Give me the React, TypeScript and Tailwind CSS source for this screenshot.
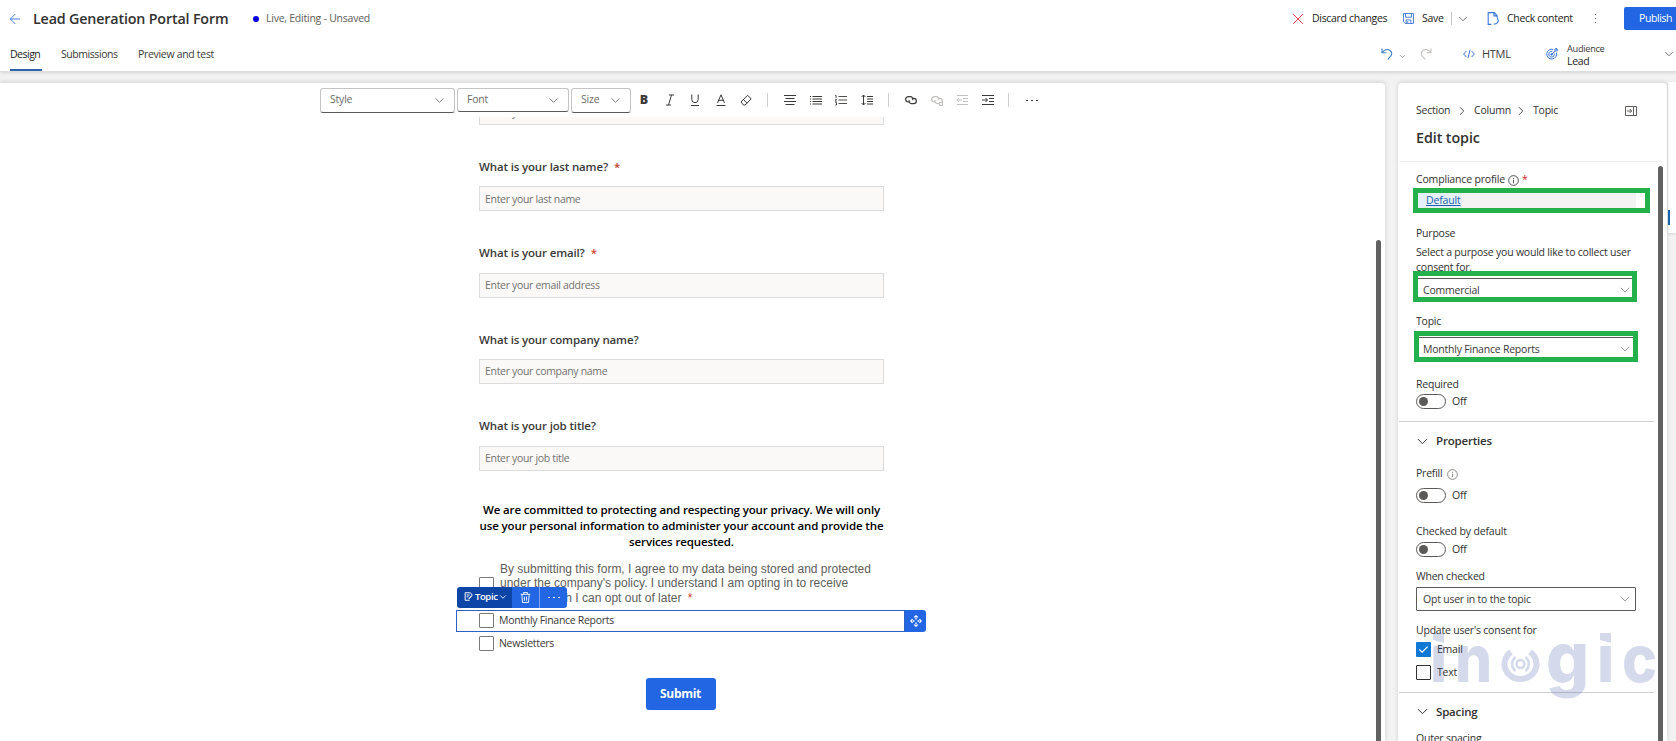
import React from 'react';
import { ArrowLeft, ChevronDown, ChevronRight, X } from 'lucide-react';
import clsx from 'clsx';

interface IconProps {
  children: React.ReactNode;
  className?: string;
  size?: number;
}

// 12-unit grid icon, drawn with thin strokes
function Icon({ children, className, size = 12 }: IconProps) {
  return (
    <svg
      width={size}
      height={size}
      viewBox="0 0 12 12"
      fill="none"
      stroke="currentColor"
      strokeWidth="1"
      className={clsx('shrink-0', className)}
    >
      {children}
    </svg>
  );
}

const fields = [
  { label: 'What is your last name?', placeholder: 'Enter your last name', required: true },
  { label: 'What is your email?', placeholder: 'Enter your email address', required: true },
  { label: 'What is your company name?', placeholder: 'Enter your company name', required: false },
  { label: 'What is your job title?', placeholder: 'Enter your job title', required: false },
];

function Header() {
  return (
    <header className="relative z-10 h-[72px] shrink-0 border-b border-[#dcdcdc] bg-white shadow-[0_1px_3px_rgba(0,0,0,0.12)]">
      <div className="flex h-[37px] items-center">
        <ArrowLeft className="ml-[7px] h-4 w-4 text-[#4a7fe0]" strokeWidth={1.5} />
        <h1 className="ml-[10px] w-[218px] text-[14.3px] font-semibold tracking-[-0.17px] text-[#323130]">
          Lead Generation Portal Form
        </h1>
        <span className="ml-[2px] h-[6px] w-[6px] rounded-full bg-[#0000e0]" />
        <span className="ml-[7px] text-[10.5px] tracking-[-0.24px] text-[#605e5c]">Live, Editing - Unsaved</span>

        <div className="ml-auto flex h-full items-center text-[10.5px] tracking-[-0.31px] whitespace-nowrap text-[#242322]">
          <X className="h-[18px] w-[18px] text-[#e0404a]" strokeWidth={1.3} />
          <span className="ml-[5px] w-[91px]">Discard changes</span>
          <Icon className="text-[#3a76d8]" size={11}>
            <path d="M.6.6h10.8v10.8H2.4L.6 9.6zM2.8.6v4h6.4v-4M3.4 11.4V7.6h5.2v3.8M5.2 9v2" />
          </Icon>
          <span className="ml-2 w-[29px]">Save</span>
          <span className="h-[13px] w-px bg-[#c8c6c4]" />
          <ChevronDown className="ml-1 h-[14px] w-[14px] text-[#605e5c]" strokeWidth={1.5} />
          <Icon className="ml-[17px] text-[#3a76d8]" size={13}>
            <path d="M4 11.4H1.1V.6h5.5l2.8 2.8v2M6.4.6v3h3M9.4 5.4l1.2 3-1.8 2.2-2.6.8" />
          </Icon>
          <span className="ml-[7px] w-[85px]">Check content</span>
          <span className="flex w-[6px] flex-col items-center gap-[3px]">
            <i className="h-px w-px bg-[#605e5c]" />
            <i className="h-px w-px bg-[#605e5c]" />
            <i className="h-px w-px bg-[#605e5c]" />
          </span>
          <button className="ml-[26px] h-[23px] w-[52px] rounded-l-[2px] bg-[#2266e3] pl-[15px] text-left text-[10.5px] font-medium tracking-[-0.42px] text-white">
            Publish
          </button>
        </div>
      </div>

      <div className="flex h-[34px] items-stretch text-[10.5px] tracking-[-0.31px] text-[#3b3a39]">
        <nav className="flex">
          <a className="ml-[10px] flex w-8 items-center border-b-2 border-[#2b64a8] pt-[3px] font-medium tracking-[-0.5px] text-[#242322]">
            Design
          </a>
          <a className="ml-[19px] flex w-[57px] items-center pt-px tracking-[-0.44px]">Submissions</a>
          <a className="ml-5 flex items-center pt-px">Preview and test</a>
        </nav>
        <div className="ml-auto flex items-center">
          <Icon className="text-[#3a7cc8]" size={12}>
            <path d="M1 .5v4.300h4.300M1 4.800C3 1.500 6.500.800 8.700 2.200c2.600 1.800 2.600 4.400.800 6.200L6.800 11.400" strokeWidth="1.100" />
          </Icon>
          <ChevronDown className="mt-1 ml-[5px] h-[9px] w-[9px] text-[#8a8886]" />
          <Icon className="ml-[13px] text-[#c3c1bf]" size={12}>
            <path d="M11 .5v4.300H6.700M11 4.800C9 1.500 5.500.800 3.300 2.200.700 4 .700 6.600 2.500 8.400l2.700 3" strokeWidth="1.100" />
          </Icon>
          <Icon className="ml-[31px] text-[#3a76d8]" size={12}>
            <path d="M3.400 3 .6 6l2.800 3M8.600 3l2.800 3-2.800 3M7 1.800 5 10.200" />
          </Icon>
          <span className="ml-[7px] w-[64px] text-[11px]">HTML</span>
          <Icon className="text-[#3a76d8]" size={12}>
            <path d="M10.300 4.500a4.900 4.900 0 1 1-3-3M8.300 5.500a2.800 2.800 0 1 1-2-2M5.800 6.200 9 3M9 3V1.200L10.400 0v1.700h1.500L10.600 3z" />
            <circle cx="5.600" cy="6.400" r=".8" fill="currentColor" />
          </Icon>
          <div className="ml-[9px] flex w-[95px] flex-col pt-px leading-[12px]">
            <span className="text-[9.2px] tracking-[-0.28px]">Audience</span>
            <span className="text-[#242322]">Lead</span>
          </div>
          <ChevronDown className="h-[14px] w-[14px] text-[#605e5c]" strokeWidth={1.5} />
        </div>
      </div>
    </header>
  );
}

function ToolbarSelect({ label, className }: { label: string; className: string }) {
  return (
    <div
      className={clsx(
        'flex items-center justify-between rounded-[3px] border border-[#c4c4c4] border-b-[#5a5a5a] pr-[7px] pl-[9px] text-[10.5px] tracking-[-0.2px] text-[#6e6c6a]',
        className,
      )}
    >
      {label}
      <ChevronDown className="h-[15px] w-[15px] text-[#605e5c]" strokeWidth={1.3} />
    </div>
  );
}

function Separator({ className }: { className: string }) {
  return <span className={clsx('h-[14px] w-px bg-[#d2d0ce]', className)} />;
}

function LinkIcon() {
  return (
    <Icon>
      <path
        d="M5.200 8H3.400a2.700 2.700 0 0 1 0-5.400h1.800a2.700 2.700 0 0 1 2.500 3.700M6.800 4.400h1.900a2.600 2.600 0 0 1 0 5.300H6.600A2.600 2.600 0 0 1 4.200 6"
        strokeWidth="1.200"
      />
    </Icon>
  );
}

function Toolbar() {
  return (
    <div className="flex h-[34px] shrink-0 items-center pl-[320px] text-[#3b3a39]">
      <ToolbarSelect label="Style" className="h-[25px] w-[135px]" />
      <ToolbarSelect label="Font" className="ml-[2px] h-6 w-[112px]" />
      <ToolbarSelect label="Size" className="ml-[2px] h-[25px] w-[60px]" />

      <div className="ml-[7px] flex items-center gap-[13.5px]">
        <span className="w-3 text-center text-[12.5px] leading-3 font-extrabold">B</span>
        <Icon>
          <path d="M5 1h5M2 11h5M7.500 1l-3 10" />
        </Icon>
        <Icon>
          <path d="M2.800.5v5a3.200 3.200 0 0 0 6.400 0v-5M2 11.500h8" />
        </Icon>
        <Icon>
          <path d="M2.500 9 6 .8 9.500 9M3.700 6.300h4.600M1.500 11.500h9" />
        </Icon>
        <Icon>
          <path d="M1 8 7.500 1.300l3.700 3.500-6 6.200H3.400zM3.400 5.600l3.700 3.600" />
        </Icon>
      </div>
      <Separator className="ml-[15px]" />
      <div className="ml-4 flex items-center gap-[13.7px]">
        <Icon>
          <path d="M0 1.500h12M1.500 4.500h9M0 7.500h12M1.500 10.500h9" />
        </Icon>
        <Icon>
          <path d="M2.500 2.500H12M2.500 5H12M2.500 7.500H12M2.500 10H12M0 2.500h1M0 5h1M0 7.500h1M0 10h1" />
        </Icon>
        <Icon>
          <path
            d="M3.500 2.500H12M3.500 6H12M3.500 9.500H12M.3 1.500h.8v2.400M.3 5.500h1.200L.3 7.300h1.300M.3 8.500h1.200v2.500H.3"
            strokeWidth=".9"
          />
        </Icon>
        <Icon>
          <path d="M2.500 1v10M.6 3l1.900-2 1.900 2M.6 9l1.900 2 1.900-2M6 2.500h6M6 5h6M6 7.500h6M6 10h6" />
        </Icon>
      </div>
      <Separator className="ml-[15px]" />
      <div className="ml-4 flex items-center gap-[13.5px]">
        <LinkIcon />
        <span className="relative flex text-[#c3c1bf]">
          <LinkIcon />
          <i className="absolute right-0 bottom-0 h-1 w-1 border border-[#c3c1bf] bg-white" />
        </span>
        <Icon className="text-[#c3c1bf]">
          <path d="M1 1.500h11M7 4.500h5M7 7.500h5M1 10.500h11M6 6H.8M2.800 4 .8 6l2 2" />
        </Icon>
        <Icon>
          <path d="M0 1.500h12M7 4.500h5M7 7.500h5M0 10.500h12M0 6h5.500M3.500 4l2 2-2 2" />
        </Icon>
      </div>
      <Separator className="ml-[14px]" />
      <span className="ml-[17px] flex gap-[3px]">
        <i className="h-px w-[2px] bg-[#3b3a39]" />
        <i className="h-px w-[2px] bg-[#3b3a39]" />
        <i className="h-px w-[2px] bg-[#3b3a39]" />
      </span>
    </div>
  );
}

function FormInput({ placeholder }: { placeholder: string }) {
  return (
    <div className="flex h-[25px] shrink-0 items-center border border-[#dcdcdc] bg-[#faf9f8] px-[5px] pt-px text-[10.5px] tracking-[-0.32px] text-[#75736f]">
      {placeholder}
    </div>
  );
}

function FormCheckbox() {
  return <span className="h-[15px] w-[15px] shrink-0 rounded-[1px] border border-[#7b7a78] bg-white" />;
}

function TopicActions() {
  return (
    <div className="absolute top-[25px] -left-[22px] flex h-[21px] w-[110px] overflow-hidden rounded-[3px] text-white">
      <div className="flex w-[55px] items-center bg-[#0c45a6] pl-[7px] text-[9.5px] font-semibold tracking-[-0.4px]">
        <Icon size={9} className="mb-[2px]">
          <path d="M7.500 11H1.500V1h7l2.500 3-4 5M3.500 4h4M3.500 6.500h2.500M6 9.500 10 5" strokeWidth="1.300" />
        </Icon>
        <span className="ml-[2px]">Topic</span>
        <ChevronDown className="ml-[1px] h-[10px] w-[10px]" />
      </div>
      <div className="flex w-[28px] items-center justify-center border-r border-[#7ba4f0] bg-[#2266e3]">
        <Icon size={11}>
          <path d="M.8 2.500h10.400M4 2.500v-2h4v2M2 2.500l.7 9h6.600l.7-9M4.800 5v4.500M7.200 5v4.500" />
        </Icon>
      </div>
      <div className="flex flex-1 items-center justify-center gap-[3px] bg-[#2266e3]">
        <i className="h-px w-[2px] bg-white" />
        <i className="h-px w-[2px] bg-white" />
        <i className="h-px w-[2px] bg-white" />
      </div>
    </div>
  );
}

function Canvas() {
  return (
    <main className="flex w-[1385px] shrink-0 flex-col rounded-tr-[4px] border-t border-[#e1e1e1] bg-white shadow-[0_0_4px_rgba(0,0,0,0.14)]">
      <Toolbar />
      <div className="flex min-h-0 flex-1 justify-between overflow-hidden">
        <div className="ml-[479px] flex w-[405px] flex-col">
          <div className="-mt-[17px] flex flex-col">
            <FormInput placeholder="Enter your first name" />
          </div>
          {fields.map((field) => (
            <div key={field.label} className="flex h-[86.4px] shrink-0 flex-col justify-end">
              <div className="mb-[11px] flex h-[18px] items-center text-[11.5px] font-semibold tracking-[-0.15px] text-[#3b3a39]">
                {field.label}
                {field.required && <span className="ml-[6px] text-[#c8402c]">*</span>}
              </div>
              <FormInput placeholder={field.placeholder} />
            </div>
          ))}

          <p className="mt-[31px] text-center text-[11.5px] leading-[16.4px] font-semibold tracking-[-0.13px] whitespace-nowrap text-black">
            We are committed to protecting and respecting your privacy. We will only
            <br />
            use your personal information to administer your account and provide the
            <br />
            services requested.
          </p>

          <div className="relative mt-[11px] flex">
            <span className="mt-[15px] flex">
              <FormCheckbox />
            </span>
            <p className="ml-[6px] font-['Liberation_Sans',Arial,sans-serif] text-[12px] leading-[14.5px] whitespace-nowrap text-[#605e5c]">
              By submitting this form, I agree to my data being stored and protected
              <br />
              under the company's policy. I understand I am opting in to receive
              <br />
              emails, which I can opt out of later <span className="ml-[3px] text-[#c8402c]">*</span>
            </p>
            <TopicActions />
          </div>

          <div className="mt-[4.5px] -mr-[42px] -ml-[23px] flex h-[22px] shrink-0 text-[10.5px] tracking-[-0.29px] text-[#3b3a39]">
            <div className="flex flex-1 items-center border border-[#2b62c4] pl-[22px]">
              <FormCheckbox />
              <span className="ml-[5px] pt-px">Monthly Finance Reports</span>
            </div>
            <div className="flex w-[21px] items-center justify-center rounded-r-[3px] bg-[#2266e3] text-white">
              <Icon>
                <path
                  d="M4.300 2.600 6 .9l1.700 1.700M4.300 9.400 6 11.100l1.700-1.700M2.600 4.300.9 6l1.700 1.700M9.400 4.300 11.100 6 9.400 7.700M6 3v1.500M6 7.500V9M3 6h1.500M7.500 6H9"
                  strokeWidth="1.400"
                />
              </Icon>
            </div>
          </div>
          <div className="flex h-[24px] shrink-0 items-center text-[10.5px] tracking-[-0.29px] text-[#3b3a39]">
            <FormCheckbox />
            <span className="ml-[5px]">Newsletters</span>
          </div>

          <button className="mt-[22px] mr-[2px] h-8 w-[70px] shrink-0 self-center rounded-[3px] bg-[#2266e3] pt-px text-[12px] font-bold tracking-[-0.28px] text-white">
            Submit
          </button>
        </div>
        <div className="mt-[123px] mr-1 w-[5px] rounded-t-full bg-[#616161]" />
      </div>
    </main>
  );
}

function InfoIcon({ className }: { className?: string }) {
  return (
    <Icon size={11} className={className}>
      <circle cx="6" cy="6" r="5.300" strokeWidth=".9" />
      <path d="M6 5.200V9M6 3.200v1" strokeWidth=".9" />
    </Icon>
  );
}

function Toggle() {
  return (
    <div className="flex h-[15px] shrink-0 items-center">
      <span className="flex h-[15px] w-[30px] items-center rounded-full border border-[#5b5a58] pl-[2px]">
        <i className="h-[9px] w-[9px] rounded-full bg-[#5b5a58]" />
      </span>
      <span className="ml-[6px]">Off</span>
    </div>
  );
}

function Dropdown({ value }: { value: string }) {
  return (
    <div className="flex h-6 w-full items-center justify-between rounded-[1px] border border-[#5b5a58] pt-px pr-[2px] pl-[6px] text-[#3b3a39]">
      {value}
      <ChevronDown className="mb-px h-4 w-4 text-[#8a8886]" strokeWidth={1.2} />
    </div>
  );
}

function Label({ children, className }: { children: React.ReactNode; className?: string }) {
  return <div className={clsx('flex h-4 shrink-0 items-center pt-[2px]', className)}>{children}</div>;
}

function SectionTitle({ children, className }: { children: React.ReactNode; className: string }) {
  return (
    <div className={clsx('flex shrink-0 items-center text-[11.5px] font-semibold tracking-[-0.18px]', className)}>
      <ChevronDown className="-ml-[2px] mr-[5px] h-[17px] w-[17px]" strokeWidth={1.4} />
      {children}
    </div>
  );
}

function Watermark() {
  return (
    <svg
      width="226"
      height="84"
      viewBox="0 0 226 84"
      className="pointer-events-none absolute top-[539px] left-[34px] fill-[#2c4aa0] font-['Inter',sans-serif] text-[66px] font-extrabold opacity-20"
    >
      <path d="M1 11h11v10L1 18z" />
      <text x="-2" y="60" textLength="17" lengthAdjust="spacingAndGlyphs">ı</text>
      <text x="23" y="60" textLength="37" lengthAdjust="spacingAndGlyphs">n</text>
      <path d="M79 30a16 15 0 1 0 19 0" fill="none" stroke="#2c4aa0" strokeWidth="6" />
      <path d="M83.500 49a9 9 0 0 1 0-14M93.500 49a9 9 0 0 0 0-14" fill="none" stroke="#2c4aa0" strokeWidth="2.500" />
      <circle cx="88.500" cy="42" r="4" fill="none" stroke="#2c4aa0" strokeWidth="2.500" />
      <text x="114" y="61" textLength="43" lengthAdjust="spacingAndGlyphs" className="text-[71px]">g</text>
      <path d="M168 11h11v10l-11-3z" />
      <text x="165" y="60" textLength="17" lengthAdjust="spacingAndGlyphs">ı</text>
      <text x="190" y="60" textLength="35" lengthAdjust="spacingAndGlyphs">c</text>
    </svg>
  );
}

function PropertiesPanel() {
  return (
    <aside className="relative ml-[13px] flex w-[269px] shrink-0 flex-col rounded-t-[4px] border-t border-[#e1e1e1] bg-white text-[10.5px] tracking-[-0.22px] whitespace-nowrap text-[#323130] shadow-[0_0_4px_rgba(0,0,0,0.14)]">
      <div className="mr-[5px] ml-px h-[79px] shrink-0 border-b border-[#ececec] pl-[17px]">
        <div className="mt-5 flex h-4 items-center">
          <span className="w-[39px]">Section</span>
          <ChevronRight className="mr-[5px] h-[14px] w-[14px]" strokeWidth={1.4} />
          <span className="w-[40px]">Column</span>
          <ChevronRight className="mr-[5px] h-[14px] w-[14px]" strokeWidth={1.4} />
          <span className="font-medium">Topic</span>
          <Icon className="mr-[25px] ml-auto text-[#605e5c]">
            <path d="M.5 1.500h11v9H.5zM8.500 1.500v9M2 6h4.500M4.700 4l2 2-2 2" />
          </Icon>
        </div>
        <h2 className="mt-[9px] text-[14.3px] leading-5 font-semibold tracking-[-0.08px]">Edit topic</h2>
      </div>

      <div className="flex min-h-0 flex-1 justify-between overflow-hidden">
        <div className="ml-px flex w-[255px] flex-col">
          <div className="flex flex-col pr-[17px] pl-[17px]">
            <Label className="mt-[9px] tracking-[-0.17px]">
              Compliance profile
              <InfoIcon className="ml-[3px]" />
              <span className="ml-[3px] text-[#c8202c]">*</span>
            </Label>
            <div className="relative mt-[5px] h-[17px] w-[220px] bg-[#f3f3f3]">
              <a className="flex h-full w-[46px] items-center bg-[#e6f0fa] pl-[10px] tracking-[-0.15px] text-[#1b5fae] underline">
                Default
              </a>
              <div className="absolute -top-1 -left-[3px] h-[25px] w-[237px] border-[5px] border-[#22b14c]" />
            </div>

            <Label className="mt-4">Purpose</Label>
            <p className="mt-[3.5px] leading-[15px]">
              Select a purpose you would like to collect user
              <br />
              consent for.
            </p>
            <div className="relative mt-[3.5px] w-[220px]">
              <Dropdown value="Commercial" />
              <div className="absolute -top-[7px] -left-[3px] h-[31px] w-[224px] border-[5px] border-[#22b14c]" />
            </div>

            <Label className="mt-[11px]">Topic</Label>
            <div className="relative mt-2 w-[220px]">
              <Dropdown value="Monthly Finance Reports" />
              <div className="absolute -top-[6px] -left-[2px] h-[31px] w-[224px] border-[5px] border-[#22b14c]" />
            </div>

            <Label className="mt-[15px] mb-[2px]">Required</Label>
            <Toggle />
          </div>

          <div className="mt-3 h-px shrink-0 bg-[#d2d0ce]" />
          <div className="flex flex-col pr-[17px] pl-[17px]">
            <SectionTitle className="h-[38px]">Properties</SectionTitle>
            <Label className="mt-[5px] mb-[7px]">
              Prefill
              <InfoIcon className="ml-[5px] text-[#75736f]" />
            </Label>
            <Toggle />
            <Label className="mt-5 mb-[3px] tracking-[-0.14px]">Checked by default</Label>
            <Toggle />
            <Label className="mt-[11px] mb-[3px]">When checked</Label>
            <div className="w-[220px]">
              <Dropdown value="Opt user in to the topic" />
            </div>
            <Label className="mt-[11px]">Update user's consent for</Label>
            <div className="mt-1 flex h-[15px] items-center">
              <span className="flex h-[15px] w-[15px] items-center justify-center rounded-[1px] bg-[#0f78d4] text-white">
                <Icon size={11}>
                  <path d="m1.500 6 3 3 6-6.200" strokeWidth="1.200" />
                </Icon>
              </span>
              <span className="ml-[6px]">Email</span>
            </div>
            <div className="mt-2 flex h-[15px] items-center">
              <span className="h-[15px] w-[15px] rounded-[1px] border border-[#323130]" />
              <span className="ml-[6px]">Text</span>
            </div>
          </div>

          <div className="mt-3 h-px shrink-0 bg-[#d2d0ce]" />
          <div className="flex flex-col pl-[17px]">
            <SectionTitle className="h-[37px]">Spacing</SectionTitle>
            <Label>Outer spacing</Label>
          </div>
        </div>
        <div className="mt-1 mr-1 w-[5px] rounded-t-full bg-[#616161]" />
      </div>
      <Watermark />
    </aside>
  );
}

export default function App() {
  return (
    <div className="flex h-[741px] w-[1676px] flex-col overflow-hidden bg-[#f2f2f2] font-['Open_Sans',sans-serif]">
      <Header />
      <div className="flex min-h-0 flex-1 pt-[10px]">
        <Canvas />
        <PropertiesPanel />
        <div className="ml-px flex h-[151px] flex-1 items-end bg-white shadow-[0_1px_3px_rgba(0,0,0,0.15)]">
          <span className="mb-2 h-[15px] w-[2px] bg-[#1267b4]" />
        </div>
      </div>
    </div>
  );
}
